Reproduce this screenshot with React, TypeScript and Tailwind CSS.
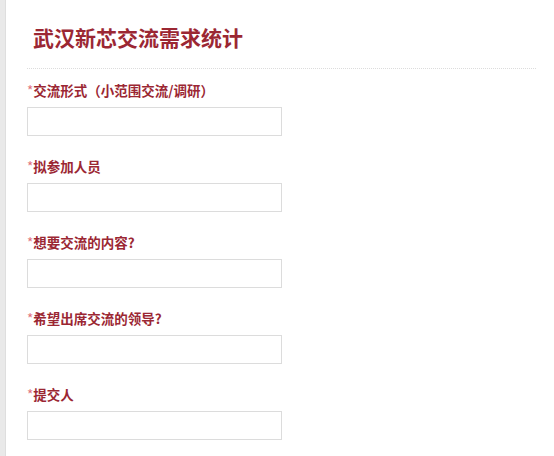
import React from 'react';

const fields = [
  '交流形式（小范围交流/调研）',
  '拟参加人员',
  '想要交流的内容?',
  '希望出席交流的领导?',
  '提交人',
];

export default function App() {
  return (
    <div
      className="flex w-[554px] h-[456px] overflow-hidden bg-white"
      style={{ fontFamily: '"Noto Sans CJK SC", "Microsoft YaHei", sans-serif' }}
    >
      <div className="w-[6px] shrink-0 bg-[#e9e9e9] border-r border-[#dedede]" />
      <div className="flex-1 pl-[21px] pr-[18px]">
        <div className="pt-[23px] pl-[6px] h-[68px]">
          <h1 className="text-[21px] leading-[28px] font-bold text-[#9b2733]">武汉新芯交流需求统计</h1>
        </div>
        <div className="border-t border-dotted border-[#dcdcdc]" />
        <div className="pt-[11px]">
          {fields.map((f) => (
            <div key={f} className="mb-[20px]">
              <label className="block text-[13.5px] leading-[20px] font-bold text-[#9b2733] mb-[7px]">
                <span className="text-[#e0707a] font-normal">*</span>
                {f}
              </label>
              <input
                type="text"
                className="block w-[255px] h-[29px] border border-[#dcdcdc] bg-white outline-none"
              />
            </div>
          ))}
        </div>
      </div>
    </div>
  );
}
